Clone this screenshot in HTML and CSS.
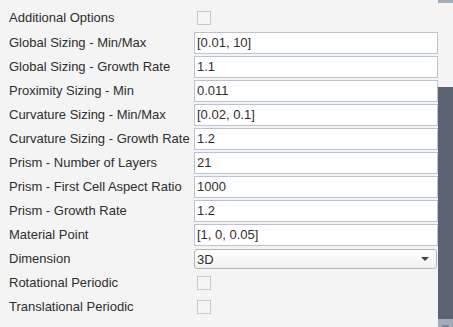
FILE: index.html
```html
<!DOCTYPE html>
<html>
    <head>
        <link rel="stylesheet" href="styles.css">
    </head>
    <body>
        <div class = "window">
            <div class = "options">
                <div class = "label">Additional Options</div>
                <div class = "field"><span class = "check"></span></div>

                <div class = "label">Global Sizing - Min/Max</div>
                <div class = "field"><div class = "entry">[0.01, 10]</div></div>

                <div class = "label">Global Sizing - Growth Rate</div>
                <div class = "field"><div class = "entry">1.1</div></div>

                <div class = "label">Proximity Sizing - Min</div>
                <div class = "field"><div class = "entry">0.011</div></div>

                <div class = "label">Curvature Sizing - Min/Max</div>
                <div class = "field"><div class = "entry">[0.02, 0.1]</div></div>

                <div class = "label">Curvature Sizing - Growth Rate</div>
                <div class = "field"><div class = "entry">1.2</div></div>

                <div class = "label">Prism - Number of Layers</div>
                <div class = "field"><div class = "entry">21</div></div>

                <div class = "label">Prism - First Cell Aspect Ratio</div>
                <div class = "field"><div class = "entry">1000</div></div>

                <div class = "label">Prism - Growth Rate</div>
                <div class = "field"><div class = "entry">1.2</div></div>

                <div class = "label">Material Point</div>
                <div class = "field"><div class = "entry">[1, 0, 0.05]</div></div>

                <div class = "label">Dimension</div>
                <div class = "field"><div class = "combo"><span>3D</span><i class = "arrow"></i></div></div>

                <div class = "label">Rotational Periodic</div>
                <div class = "field"><span class = "check"></span></div>

                <div class = "label">Translational Periodic</div>
                <div class = "field"><span class = "check"></span></div>
            </div>
            <div class = "scrollbar">
                <div class = "cap"></div>
                <div class = "gap"></div>
                <div class = "thumb"></div>
                <div class = "cap bottom"><i class = "grip"></i></div>
            </div>
        </div>
    </body>
</html>
```

FILE: styles.css
```css
body {
    margin: 0;
    font-family: "Liberation Sans", Arial, sans-serif;
    font-size: 13px;
    color: #2e2e2e;
    background-color: #f4f4f4;
}
.window {
    display: flex;
    height: 327px;
    overflow: hidden;
}
.options {
    flex: 1;
    display: grid;
    grid-template-columns: 194px 244px;
    grid-template-rows: 25px;
    grid-auto-rows: 24px;
    padding-top: 5px;
    align-content: start;
}
.label {
    padding-left: 9px;
    display: flex;
    align-items: center;
    white-space: nowrap;
}
.field {
    display: flex;
    align-items: center;
}
.check {
    width: 12px;
    height: 12px;
    margin-left: 3px;
    margin-top: 1px;
    border: 1px solid #c9c9c9;
    background-color: #f5f5f5;
}
.entry {
    align-self: flex-end;
    box-sizing: border-box;
    width: 100%;
    height: 22px;
    border: 1px solid #b9c4d3;
    background-color: white;
    padding: 0 2px;
    line-height: 19px;
}
.combo {
    box-sizing: border-box;
    width: 243px;
    height: 20px;
    margin-top: 2px;
    border: 1px solid #b5b5b5;
    border-radius: 3px;
    background: linear-gradient(#ffffff, #f1f1f1);
    padding: 0 2px;
    display: flex;
    align-items: center;
    justify-content: space-between;
}
.arrow {
    width: 0;
    height: 0;
    margin-right: 5px;
    border-left: 4px solid transparent;
    border-right: 4px solid transparent;
    border-top: 4px solid #444;
}
.scrollbar {
    width: 15px;
    display: flex;
    flex-direction: column;
}
.cap {
    height: 3px;
    background-color: #a2adb8;
}
.gap {
    height: 84px;
}
.thumb {
    height: 232px;
    background-color: #5b6272;
}
.cap.bottom {
    flex: 1;
    display: flex;
    align-items: flex-end;
    justify-content: center;
}
.grip {
    width: 7px;
    height: 2px;
    background-color: #7d8793;
}
```
